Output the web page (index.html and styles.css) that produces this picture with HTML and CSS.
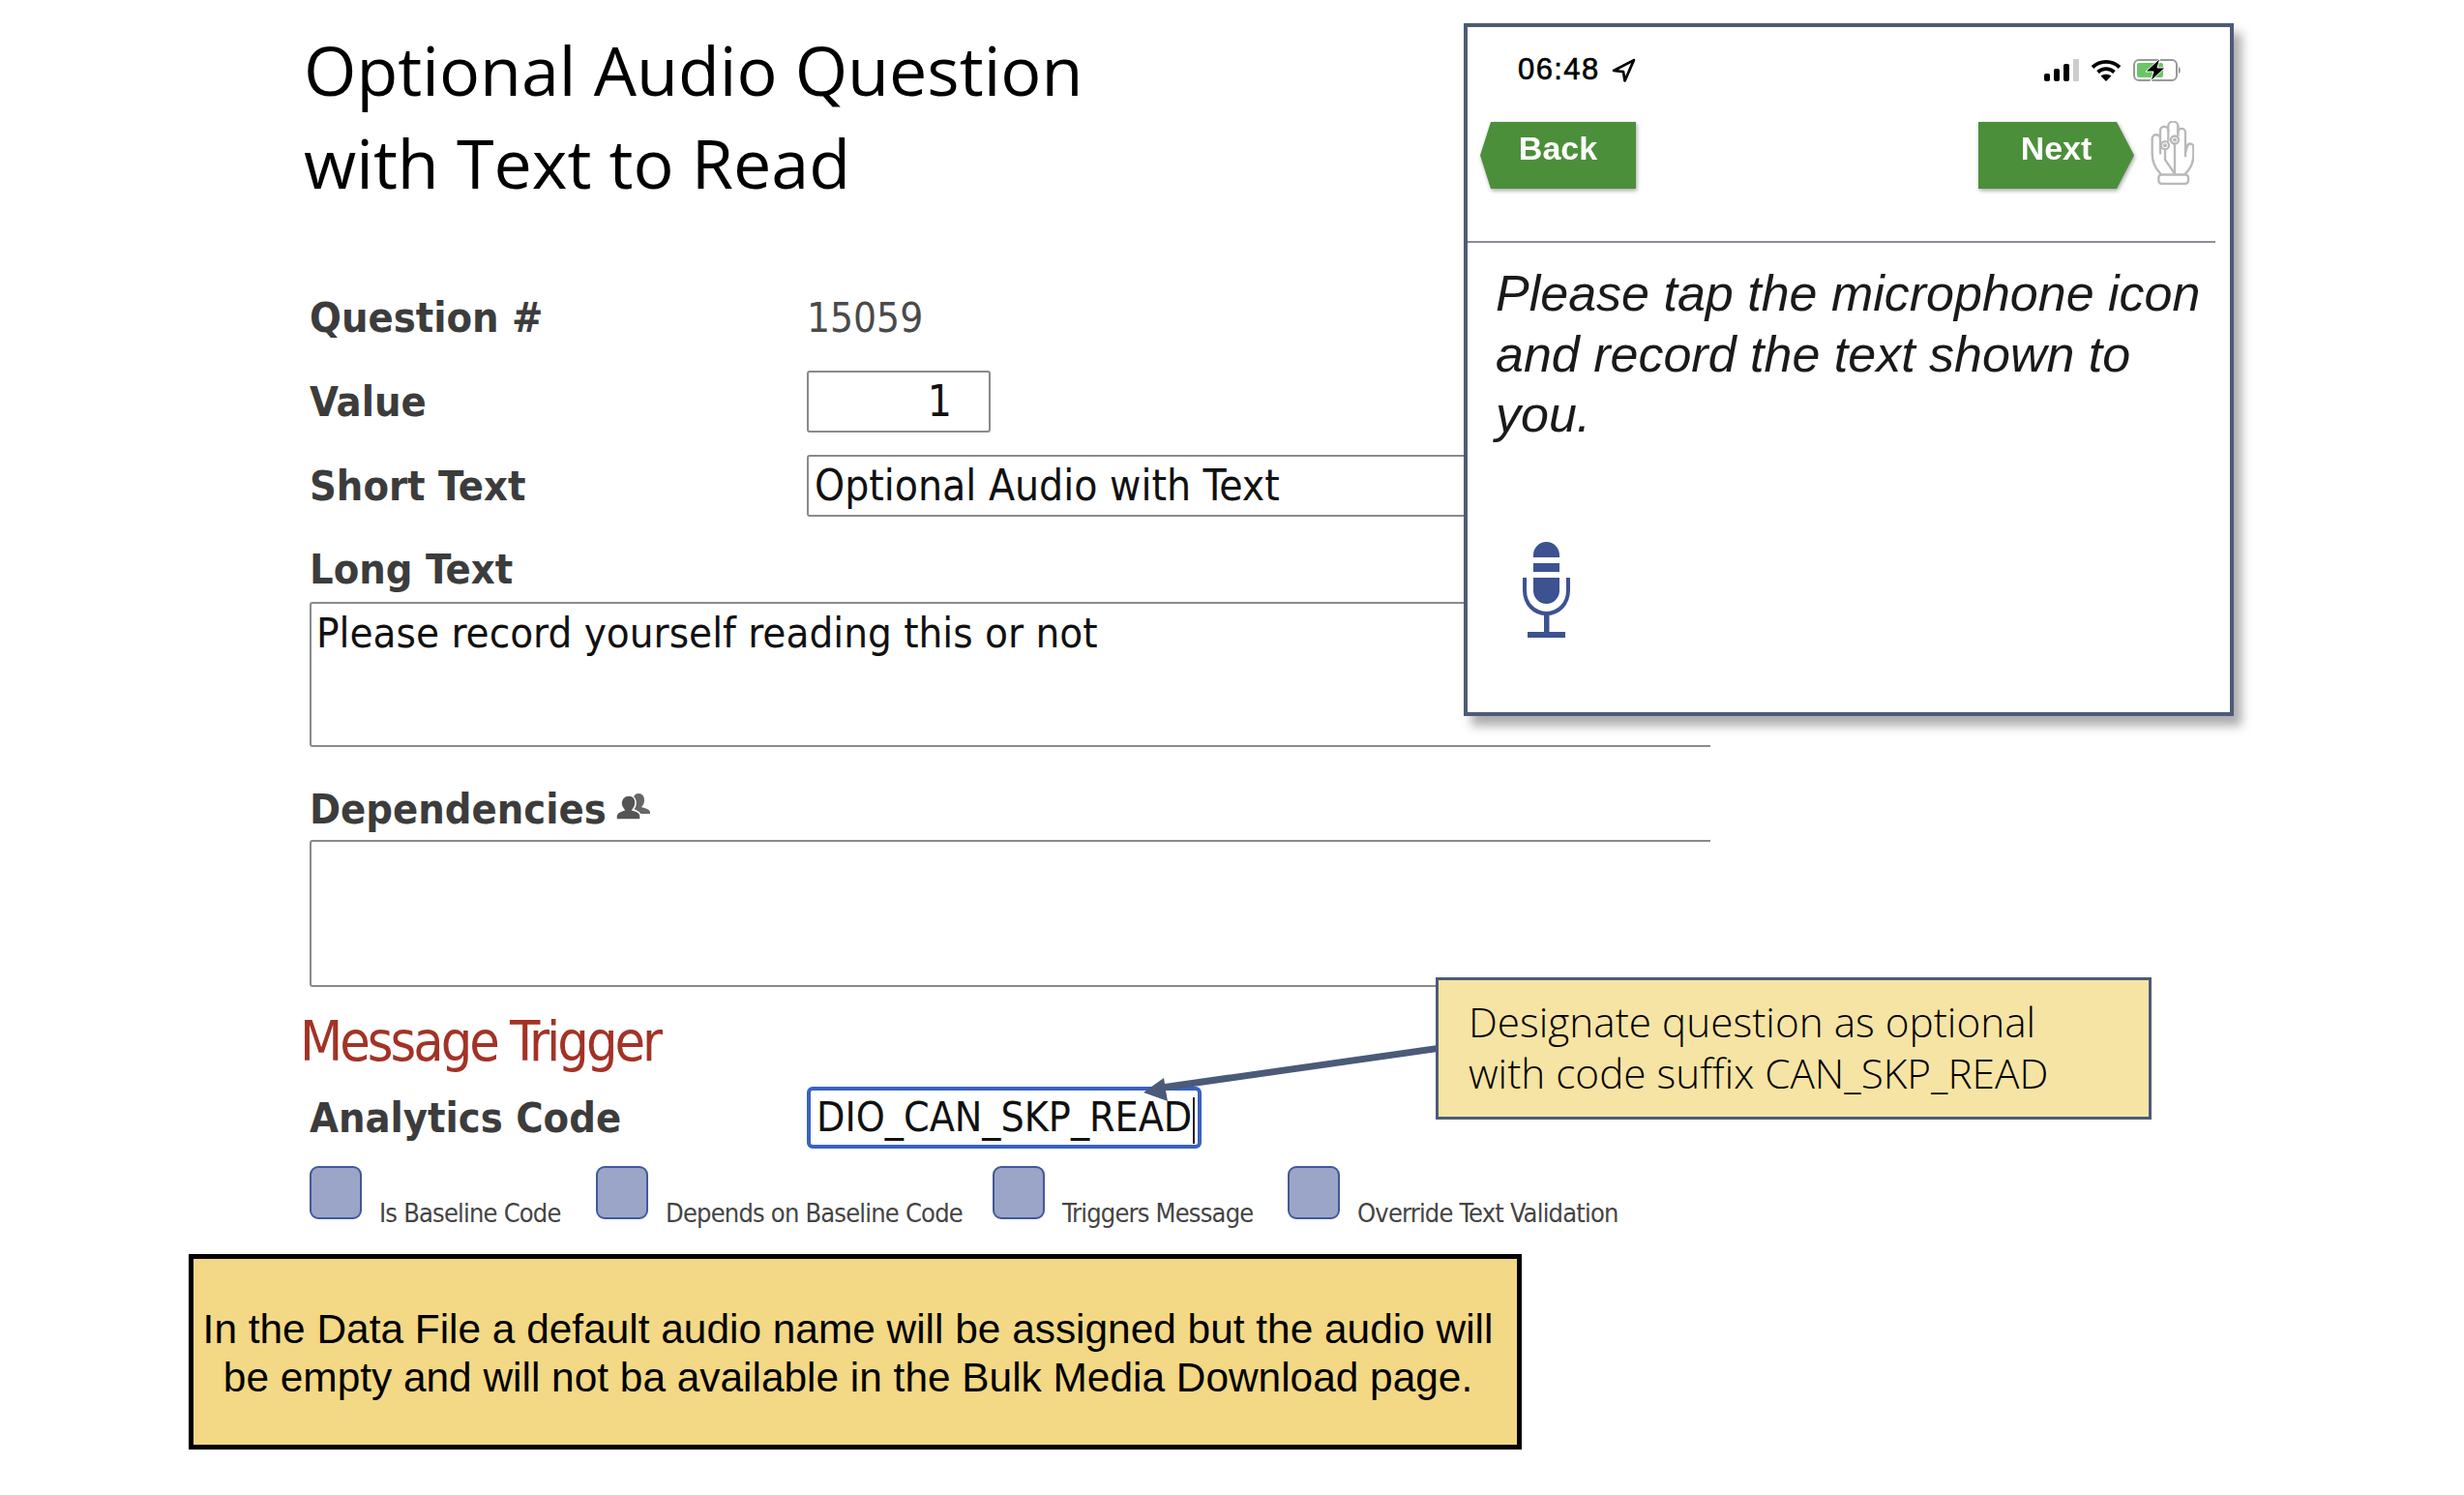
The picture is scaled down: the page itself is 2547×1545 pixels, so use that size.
FILE: index.html
```html
<!DOCTYPE html>
<html lang="en">
<head>
<meta charset="utf-8">
<title>Optional Audio Question</title>
<link rel="stylesheet" href="styles.css">
</head>
<body>
<main class="slide">
  <h1 class="title">Optional Audio Question<br>with Text to Read</h1>

  <section class="form">
    <div class="row">
      <div class="label">Question #</div>
      <div class="static">15059</div>
    </div>
    <div class="row">
      <div class="label">Value</div>
      <div class="field field-value">1</div>
    </div>
    <div class="row">
      <div class="label">Short Text</div>
      <div class="field field-short">Optional Audio with Text</div>
    </div>
    <div class="label label-long">Long Text</div>
    <div class="area">Please record yourself reading this or not</div>
    <div class="label label-dep">Dependencies
      <svg class="dep-icon" viewBox="0 0 35 27" aria-hidden="true">
        <path fill="#666" d="M23 0c4 0 6 3 6 7 0 3-1 5-3 7 3 1 8 2 9 5v2H23c0-3-3-4-5-5 1-2 0-3-1-5-1-5 1-11 6-11z"/>
        <path fill="#555" stroke="#fff" stroke-width="1.5" d="M13 2c5 0 7 4 7 8 0 3-1 5-3 7 4 1 8 3 8 6v4H0v-4c0-3 5-5 8-6-2-2-3-4-3-7 0-4 3-8 8-8z"/>
      </svg>
    </div>
    <div class="area area-dep"></div>
    <div class="trigger">Message Trigger</div>
    <div class="row row-code">
      <div class="label">Analytics Code</div>
      <div class="field field-code">DIO_CAN_SKP_READ<span class="caret"></span></div>
    </div>
    <div class="checks">
      <div class="check check-1"><span class="box"></span><span class="check-label">Is Baseline Code</span></div>
      <div class="check check-2"><span class="box"></span><span class="check-label">Depends on Baseline Code</span></div>
      <div class="check check-3"><span class="box"></span><span class="check-label">Triggers Message</span></div>
      <div class="check"><span class="box"></span><span class="check-label">Override Text Validation</span></div>
    </div>
  </section>

  <div class="note">In the Data File a default audio name will be assigned but the audio will<br>be empty and will not ba available in the Bulk Media Download page.</div>

  <aside class="phone">
    <div class="status">
      <div class="clock">06:48
        <svg class="loc" viewBox="0 0 24 24" aria-hidden="true"><path fill="none" stroke="#000" stroke-width="2.6" stroke-linejoin="round" d="M22 2 2 12.500l9.500 1 1.500 9z"/></svg>
      </div>
      <div class="status-icons">
        <svg class="signal" viewBox="0 0 36 23" aria-hidden="true">
          <rect x="0" y="15" width="6" height="8" rx="2"/><rect x="10" y="10" width="6" height="13" rx="2"/><rect x="20" y="5" width="6" height="18" rx="2"/><rect x="30" y="0" width="6" height="23" rx="1" fill="#ccc"/>
        </svg>
        <svg class="wifi" viewBox="0 0 32 23" aria-hidden="true">
          <path fill="none" stroke="#000" stroke-width="3.800" d="M2 8.500c8-7.500 20-7.500 28 0M7.500 13.500c5-4.500 12-4.500 17 0"/>
          <path d="M16 23 10.500 17.500c3-2.500 8-2.500 11 0z"/>
        </svg>
        <svg class="battery" viewBox="0 0 50 24" aria-hidden="true">
          <rect x="1" y="2" width="44" height="21" rx="5" fill="#fff" stroke="#999" stroke-width="2"/>
          <rect x="4" y="5" width="27" height="15" rx="2" fill="#6cc667"/>
          <path d="M47 9c2 .5 2.500 6 0 7z" fill="#888"/>
          <path d="M28 0 13 14h8l-3 10 15-14h-8z" stroke="#fff" stroke-width="1"/>
        </svg>
      </div>
    </div>
    <nav class="phone-nav">
      <div class="nav-wrap"><div class="nav-btn nav-back">Back</div></div>
      <div class="nav-wrap"><div class="nav-btn nav-next">Next</div></div>
      <svg class="hand" viewBox="0 0 135 197" aria-hidden="true">
        <g fill="none" stroke="#b9b9b9" stroke-width="7" stroke-linecap="round" stroke-linejoin="round">
          <path d="M30 162C16 148 5 125 5 100V55c0-17 25-17 25 0V30c0-17 25-17 25 0V15c0-18 30-18 30 0V36c0-17 23-17 23 0v62l6-20c4-12 19-10 19 3v25c0 24-11 43-24 56"/>
          <path d="M30 55v45M55 30v30M85 15v30M108 98v10"/>
          <path d="M45 88v32l28 40M75 70v95"/>
          <rect x="25" y="166" width="92" height="28" rx="9"/>
          <circle cx="45" cy="75" r="12"/>
          <circle cx="75" cy="58" r="12"/>
        </g>
        <circle cx="45" cy="75" r="6" fill="#b9b9b9"/>
        <circle cx="75" cy="58" r="6" fill="#b9b9b9"/>
      </svg>
    </nav>
    <div class="phone-rule"></div>
    <p class="prompt">Please tap the microphone icon and record the text shown to you.</p>
    <svg class="mic" viewBox="0 0 49 99" aria-hidden="true">
      <path fill="#3c5291" d="M11 16V13.500C11 6 17 0 24.500 0S38 6 38 13.500V16zM11 22h27v9H11zM11 37h27v13.500C38 58 32 64 24.500 64S11 58 11 50.500z"/>
      <path fill="none" stroke="#3c5291" stroke-width="4" d="M2 37v13c0 14 10 24 22.500 24S47 64 47 50V37"/>
      <path fill="#3c5291" d="M22 73h5.500v20H44v6H5v-6h17z"/>
    </svg>
  </aside>

  <aside class="callout">Designate question as optional<br>with code suffix CAN_SKP_READ</aside>
  <svg class="arrow" viewBox="0 0 310 60" aria-hidden="true">
    <path fill="#4a5a78" d="M306 0v7L25 47 27 58 2 49 23 34 24 40z"/>
  </svg>
</main>
</body>
</html>
```
FILE: styles.css
```css
* { box-sizing: border-box; }
html, body { margin: 0; background: #fff; }
.slide {
  position: relative;
  width: 2547px;
  height: 1545px;
  overflow: hidden;
  background: #fff;
  padding-top: 25px;
}
.title {
  margin: 0 0 0 314px;
  font: 400 70px/95.500px "Open Sans", sans-serif;
  color: #000;
}
.form {
  margin: 80px 0 0 320px;
  width: 1448px;
  font-family: "DejaVu Sans", sans-serif;
  font-stretch: condensed;
}
.row {
  display: grid;
  grid-template-columns: 514px 1fr;
  align-items: center;
  height: 64px;
  margin-bottom: 23px;
}
.label {
  font-size: 43px;
  line-height: 64px;
  font-weight: 700;
  color: #3c3c3c;
}
.static { font-size: 42px; color: #4a4a4a; }
.field {
  height: 64px;
  border: 2px solid #8a8a8a;
  border-radius: 3px;
  font-size: 44px;
  line-height: 60px;
  color: #111;
  padding: 0 6px;
  background: #fff;
}
.field-value { width: 190px; text-align: right; padding-right: 38px; }
.label-long { height: 65px; line-height: 62px; }
.area {
  height: 150px;
  border: solid #8a8a8a;
  border-width: 2px 0 2px 2px;
  border-radius: 3px 0 0 3px;
  font-size: 43.500px;
  line-height: 60px;
  color: #111;
  padding: 0 5px;
  margin-bottom: 32px;
}
.label-dep { height: 64px; display: flex; align-items: center; gap: 12px; }
.dep-icon { width: 35px; height: 27px; margin: -6px 0 0 -2px; }
.area-dep { height: 152px; margin-bottom: 22px; }
.trigger {
  margin-left: -10px;
  height: 64px;
  font-size: 57px;
  line-height: 68px;
  letter-spacing: -3px;
  color: #a23326;
  margin-bottom: 17px;
}
.row-code { margin-bottom: 18px; }
.field-code {
  width: 408px;
  border: 4px solid #3a62c0;
  border-radius: 6px;
  font-size: 42.500px;
  line-height: 56px;
  white-space: nowrap;
  padding: 0 0 0 6px;
  position: relative;
}
.caret {
  display: inline-block;
  width: 2px;
  height: 48px;
  background: #222;
  vertical-align: middle;
  margin-left: 1px;
}
.checks { display: flex; align-items: flex-start; }
.check { display: flex; align-items: flex-start; gap: 18px; }
.check-1 { width: 296px; }
.check-2 { width: 410px; }
.check-3 { width: 305px; }
.box {
  width: 54px;
  height: 55px;
  background: #9ba5c7;
  border: 2px solid #44589a;
  border-radius: 9px;
}
.check-label {
  font-size: 27px;
  line-height: 36px;
  letter-spacing: -0.8px;
  margin-top: 31px;
  color: #444;
  white-space: nowrap;
}
.note {
  position: absolute;
  left: 195px;
  top: 1296px;
  width: 1378px;
  height: 202px;
  background: #f3d885;
  border: 5px solid #000;
  font: 400 42.400px/50px "Liberation Sans", sans-serif;
  color: #000;
  text-align: center;
  padding: 48px 15px 0 0;
  white-space: nowrap;
}
.phone {
  position: absolute;
  left: 1513px;
  top: 24px;
  width: 796px;
  height: 716px;
  background: #fff;
  border: 4px solid #4c5b78;
  box-shadow: 8px 10px 10px rgba(70, 70, 70, .45);
  font-family: "Liberation Sans", sans-serif;
}
.status {
  display: flex;
  justify-content: space-between;
  align-items: center;
  height: 28px;
  margin-top: 30px;
  padding: 0 50px 0 52px;
}
.clock {
  display: flex;
  align-items: center;
  gap: 12px;
  font-size: 31px;
  font-weight: 400;
  letter-spacing: 1.400px;
  -webkit-text-stroke: .6px #000;
  color: #000;
  white-space: nowrap;
}
.loc { width: 25px; height: 25px; }
.status-icons { display: flex; align-items: center; gap: 12px; }
.signal { width: 36px; height: 23px; }
.wifi { width: 32px; height: 23px; }
.battery { width: 50px; height: 24px; }
.phone-nav {
  display: flex;
  align-items: flex-start;
  margin-top: 40px;
  padding-left: 13px;
  height: 70px;
}
.nav-wrap { filter: drop-shadow(1px 2px 2px rgba(0, 0, 0, .35)); }
.nav-btn {
  width: 161px;
  height: 69px;
  background: #4c8f3a;
  color: #fff;
  font-size: 34px;
  font-weight: 700;
  line-height: 54px;
  text-align: center;
}
.nav-back { clip-path: polygon(11px 0, 100% 0, 100% 100%, 11px 100%, 0 50%); }
.nav-next { clip-path: polygon(0 0, 143px 0, 100% 50%, 143px 100%, 0 100%); }
.nav-wrap + .nav-wrap { margin-left: 354px; }
.hand { width: 45px; height: 66px; margin: -1px 0 0 17px; }
.phone-rule {
  height: 2px;
  background: #8a8f98;
  margin: 53px 15px 0 0;
}
.prompt {
  margin: 21px 0 0 29px;
  width: 745px;
  font-size: 52px;
  line-height: 62.500px;
  font-style: italic;
  color: #1a1a1a;
}
.mic { display: block; width: 49px; height: 99px; margin: 100px 0 0 57px; }
.callout {
  position: absolute;
  left: 1484px;
  top: 1010px;
  width: 740px;
  height: 147px;
  background: #f6e4a4;
  border: 3px solid #4c5b78;
  padding: 16px 0 0 31px;
  font: 300 42.300px/53px "Open Sans", sans-serif;
  color: #000;
  white-space: nowrap;
}
.arrow {
  position: absolute;
  left: 1180px;
  top: 1080px;
  width: 310px;
  height: 60px;
}
```
